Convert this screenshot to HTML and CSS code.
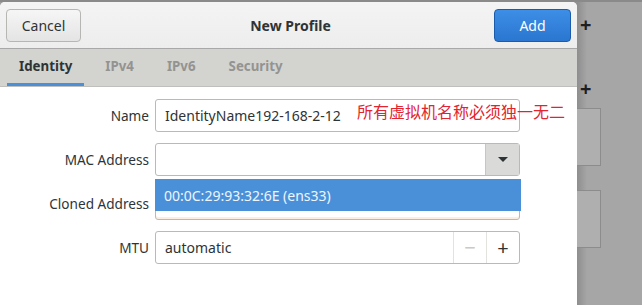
FILE: index.html
```html
<!DOCTYPE html>
<html lang="en">
<head>
    <meta charset="UTF-8">
    <title>New Profile</title>
    <link rel="stylesheet" href="styles.css">
</head>
<body>
    <div class="screen">
        <!-- Dialog -->
        <div class="dialog">
            <header class="header-bar">
                <button class="btn btn-cancel">Cancel</button>
                <span class="title">New Profile</span>
                <button class="btn btn-add">Add</button>
            </header>

            <nav class="tabs">
                <span class="tab active">Identity</span>
                <span class="tab">IPv4</span>
                <span class="tab">IPv6</span>
                <span class="tab">Security</span>
            </nav>

            <section class="form">
                <label class="label">Name</label>
                <div class="field">IdentityName192-168-2-12</div>

                <label class="label">MAC Address</label>
                <div class="field combo">
                    <span class="combo-text"></span>
                    <span class="combo-btn"><span class="arrow"></span></span>
                    <div class="popup">00:0C:29:93:32:6E (ens33)</div>
                </div>

                <label class="label">Cloned Address</label>
                <div class="field cloned"></div>

                <label class="label">MTU</label>
                <div class="field spin">
                    <span class="spin-text">automatic</span>
                    <span class="spin-btn minus">&minus;</span>
                    <span class="spin-btn plus">+</span>
                </div>
            </section>

            <span class="note">所有虚拟机名称必须独一无二</span>
        </div>

        <!-- Window behind -->
        <div class="behind">
            <span class="plus-sign">+</span>
            <span class="plus-sign second">+</span>
            <div class="ghost-box"></div>
            <div class="ghost-box"></div>
        </div>
    </div>
</body>
</html>
```

FILE: styles.css
```css
body {
    margin: 0;
    background-color: #a5a5a5;
    font-family: "Noto Sans", "Open Sans", sans-serif;
    font-size: 14px;
    color: #2e3436;
}
.screen {
    display: flex;
    width: 642px;
    height: 305px;
    overflow: hidden;
    border-top: 2px solid #8a8a8a;
    box-sizing: border-box;
}
.dialog {
    position: relative;
    width: 577px;
    flex: none;
    background-color: white;
    border-radius: 5px 5px 0 0;
    box-shadow: 2px 0 6px rgba(0, 0, 0, 0.25);
}
.header-bar {
    display: flex;
    align-items: center;
    justify-content: space-between;
    height: 46px;
    padding: 0 6px;
    background: linear-gradient(#f4f4f4, #ededed);
    border-bottom: 1px solid #a8a8a8;
    border-radius: 5px 5px 0 0;
}
.btn {
    height: 33px;
    font-family: inherit;
    font-size: 14px;
    border-radius: 4px;
    padding: 0;
}
.btn-cancel {
    width: 75px;
    color: #2e3436;
    background: linear-gradient(#f6f6f6, #e4e4e4);
    border: 1px solid #b6b6b3;
}
.btn-add {
    width: 77px;
    color: white;
    background: linear-gradient(#3d8ee6, #2a76d0);
    border: 1px solid #1b5bab;
}
.title {
    font-weight: bold;
    font-size: 14px;
    margin-left: 6px;
}
.tabs {
    display: flex;
    height: 37px;
    padding-left: 7px;
    background-color: #d3d3d0;
    border-bottom: 1px solid #bfbfbc;
}
.tab {
    display: flex;
    align-items: center;
    padding: 0 12px 0 12px;
    margin-right: 9px;
    font-size: 13.3px;
    font-weight: bold;
    color: #939391;
    border-bottom: 3px solid transparent;
}
.tab.active {
    color: #2e3436;
    border-bottom-color: #4a90d9;
}
.form {
    display: grid;
    grid-template-columns: 149px 365px;
    grid-auto-rows: 33px;
    column-gap: 6px;
    row-gap: 11px;
    padding-top: 12px;
}
.label {
    display: flex;
    align-items: center;
    justify-content: flex-end;
    font-size: 13.6px;
    padding-bottom: 1px;
}
.field {
    position: relative;
    display: flex;
    align-items: center;
    padding-left: 9px;
    border: 1px solid #b9b9b6;
    border-radius: 3px;
    background-color: white;
    box-sizing: border-box;
}
.combo,
.spin {
    padding-left: 0;
}
.combo-text,
.spin-text {
    flex: 1;
    padding-left: 9px;
}
.combo-btn {
    display: flex;
    align-items: center;
    justify-content: center;
    width: 33px;
    height: 100%;
    background-color: #dadad8;
    border-left: 1px solid #c6c6c3;
}
.arrow {
    width: 0;
    height: 0;
    border-left: 5px solid transparent;
    border-right: 5px solid transparent;
    border-top: 5px solid #2e3436;
}
.popup {
    position: absolute;
    left: -1px;
    top: 35px;
    width: 366px;
    height: 32px;
    box-sizing: border-box;
    padding-left: 9px;
    display: flex;
    align-items: center;
    background-color: #4a90d9;
    color: #eef5fd;
    z-index: 2;
}
.cloned {
    border-color: #b9b9b6;
    box-shadow: inset 0 -2px 0 #fdeee2;
}
.spin-btn {
    display: flex;
    align-items: center;
    justify-content: center;
    width: 32px;
    height: 100%;
    border-left: 1px solid #e2e2df;
    font-size: 20px;
}
.minus {
    color: #c9c9c7;
}
.plus {
    color: #2e3436;
}
.note {
    position: absolute;
    left: 357px;
    top: 97px;
    font-family: "Noto Sans CJK SC", sans-serif;
    font-size: 16px;
    color: #e2242f;
}
.behind {
    position: relative;
    flex: 1;
    padding-top: 106px;
    background: linear-gradient(to right, #8e8e8e, #a6a6a6 10px);
}
.plus-sign {
    position: absolute;
    left: 3px;
    top: 9px;
    font-size: 20px;
    font-weight: bold;
    color: #1e1e1e;
}
.plus-sign.second {
    top: 73px;
}
.ghost-box {
    width: 24px;
    height: 58px;
    margin-bottom: 24px;
    background-color: #afafaf;
    border: 1px solid #8c8c8c;
    border-left: none;
    box-sizing: border-box;
}
```
